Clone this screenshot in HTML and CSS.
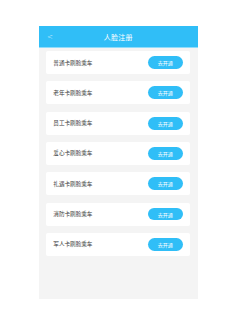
FILE: index.html
```html
<!DOCTYPE html>
<html lang="zh">
<head>
  <meta charset="UTF-8">
  <title>人脸注册</title>
  <link rel="stylesheet" href="styles.css">
</head>
<body>
<div class="phone">
  <div class="header">
    <span class="back">&lt;</span>
    <span class="title">人脸注册</span>
  </div>
  <div class="list">
    <div class="card"><span>普通卡刷脸乘车</span><div class="open-btn">去开通</div></div>
    <div class="card"><span>老年卡刷脸乘车</span><div class="open-btn">去开通</div></div>
    <div class="card"><span>员工卡刷脸乘车</span><div class="open-btn">去开通</div></div>
    <div class="card"><span>爱心卡刷脸乘车</span><div class="open-btn">去开通</div></div>
    <div class="card"><span>礼遇卡刷脸乘车</span><div class="open-btn">去开通</div></div>
    <div class="card"><span>消防卡刷脸乘车</span><div class="open-btn">去开通</div></div>
    <div class="card"><span>军人卡刷脸乘车</span><div class="open-btn">去开通</div></div>
  </div>
</div>
</body>
</html>
```
FILE: styles.css
```css
* { box-sizing: border-box; }
body {
  margin: 0;
  background: #fff;
  font-family: "Noto Sans CJK SC", "Noto Sans", sans-serif;
}
.phone {
  margin: 26px 0 0 38.5px;
  width: 159.5px;
  height: 273px;
  background: #f4f4f4;
}
.header {
  height: 22px;
  background: #30bef7;
  border-bottom: 0.6px solid #8fdcfb;
  display: flex;
  align-items: center;
  justify-content: center;
  position: relative;
  color: #fff;
}
.back {
  position: absolute;
  left: 8.5px;
  top: 0;
  bottom: 0;
  display: flex;
  align-items: center;
  font-size: 7px;
  font-family: "DejaVu Sans", sans-serif;
  font-weight: 200;
  opacity: 0.85;
}
.title {
  font-size: 7px;
  letter-spacing: 0.2px;
}
.list {
  padding: 3px 8px 0 7.5px;
  display: flex;
  flex-direction: column;
  gap: 7.33px;
}
.card {
  height: 23px;
  background: #fff;
  border-radius: 2px;
  display: flex;
  align-items: center;
  justify-content: space-between;
  padding: 0 7px 0 7.3px;
  font-size: 5.6px;
  color: #3a3a3a;
}
.open-btn {
  width: 35.3px;
  height: 12.7px;
  border-radius: 7px;
  background: #30bef7;
  color: #fff;
  font-size: 5px;
  display: flex;
  align-items: center;
  justify-content: center;
}
```
